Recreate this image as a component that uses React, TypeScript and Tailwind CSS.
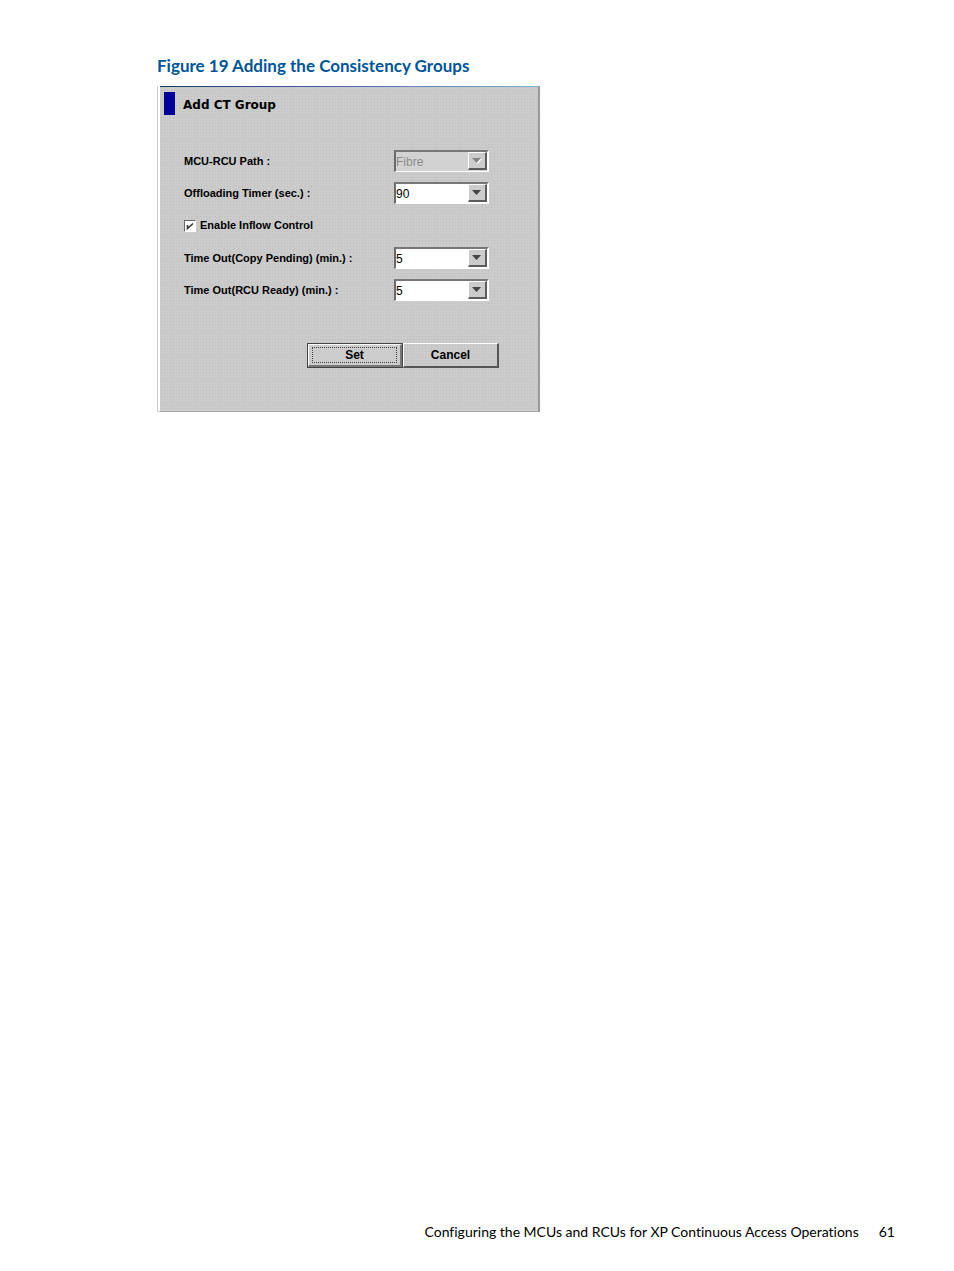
import { useState } from "react";
import type { ReactNode } from "react";

interface SelectRowProps {
  id: string;
  label: string;
  options: string[];
  disabled?: boolean;
}

const SelectRow = ({ id, label, options, disabled = false }: SelectRowProps) => (
  <div className="flex h-[22px] items-center justify-between">
    <label htmlFor={id} className="whitespace-nowrap">
      {label}
    </label>
    <div className="relative h-[22px] w-[95px] shrink-0">
      <select
        id={id}
        disabled={disabled}
        className="block h-full w-full appearance-none rounded-none border-t-2 border-r-2 border-b border-l-2 border-t-[#777777] border-r-white border-b-white border-l-[#6a6a6a] bg-white pt-px pr-5 font-normal text-xs text-black opacity-100 outline-none disabled:bg-[#d2d2d2] disabled:text-[#8c8c8c]"
      >
        {options.map((option) => (
          <option key={option}>{option}</option>
        ))}
      </select>
      <span className="pointer-events-none absolute top-0.5 right-0.5 flex h-[18px] w-[19px] items-center justify-center border-t border-r-2 border-b-2 border-l border-t-white border-r-[#5c5c5c] border-b-[#5c5c5c] border-l-white bg-[#cccccc]">
        <svg width="10" height="6" viewBox="0 0 10 6" aria-hidden="true">
          {disabled && <path d="M1 1h9L5.5 6z" fill="#ffffff" />}
          <path d="M0 0h9L4.5 5z" fill={disabled ? "#858585" : "#444444"} />
        </svg>
      </span>
    </div>
  </div>
);

const DialogButton = ({ children, focused = false }: { children: ReactNode; focused?: boolean }) => (
  <button
    type="button"
    className={
      focused
        ? "h-[25px] w-24 border border-[#444444] bg-[#cccccc] text-xs font-bold"
        : "h-[25px] w-24 border-t border-r-2 border-b-2 border-l border-t-white border-r-[#555555] border-b-[#555555] border-l-white text-xs font-bold"
    }
  >
    {focused ? (
      <span className="flex h-full w-full border-t border-r-2 border-b-2 border-l border-t-white border-r-[#777777] border-b-[#777777] border-l-white px-[3px] py-0.5">
        <span className="flex h-full w-full items-center justify-center border border-dotted border-[#444444]">
          {children}
        </span>
      </span>
    ) : (
      children
    )}
  </button>
);

const AddGroupDialog = () => {
  const [inflow, setInflow] = useState(true);

  return (
    <form className="w-full max-w-[383px] border-l border-[#cccccc] font-['Liberation_Sans',Arial,sans-serif] text-[11px] font-bold text-black">
      <div className="border-r-2 border-b border-l-2 border-r-[#999999] border-b-[#aaaaaa] border-l-white bg-[#cbcbcb] bg-[radial-gradient(#bfbfbf_25%,transparent_25%)] bg-[length:3px_3px] pb-[43px]">
        <div className="h-px bg-linear-to-r from-[#123c70] via-[#5566b8] to-[#7fb5cf]" />
        <div className="flex items-end gap-2 px-1 pt-[5px]">
          <span className="h-[23px] w-[11px] bg-[#000099]" />
          <h2 className="font-['DejaVu_Sans',Verdana,sans-serif] text-xs leading-5 font-bold">
            Add CT Group
          </h2>
        </div>

        <div className="flex flex-col gap-2.5 pt-[35px] pr-[49px] pl-6">
          <SelectRow id="path" label="MCU-RCU Path :" options={["Fibre"]} disabled />
          <SelectRow id="offload" label="Offloading Timer (sec.) :" options={["90", "120"]} />
          <label className="flex h-[23px] items-center gap-1">
            <span className="relative flex size-3">
              <input
                type="checkbox"
                checked={inflow}
                onChange={(e) => setInflow(e.target.checked)}
                className="size-3 appearance-none border border-t-[#666666] border-r-white border-b-white border-l-[#666666] bg-white"
              />
              {inflow && (
                <svg
                  className="pointer-events-none absolute inset-0"
                  width="12"
                  height="12"
                  viewBox="0 0 12 12"
                  aria-hidden="true"
                >
                  <path d="M3.5 5v3.5L9 3.5" fill="none" stroke="#333333" strokeWidth="1.6" />
                </svg>
              )}
            </span>
            Enable Inflow Control
          </label>
          <SelectRow id="copy" label="Time Out(Copy Pending) (min.) :" options={["5", "10"]} />
          <SelectRow id="ready" label="Time Out(RCU Ready) (min.) :" options={["5", "10"]} />
        </div>

        <div className="flex justify-end pt-[42px] pr-[39px]">
          <DialogButton focused>Set</DialogButton>
          <DialogButton>Cancel</DialogButton>
        </div>
      </div>
    </form>
  );
};

export default function App() {
  return (
    <div className="flex min-h-screen flex-col bg-white font-[Lato,sans-serif]">
      <main className="flex-1 pt-[54px] pr-10 pl-[157px]">
        <h1 className="mb-2 text-[17px] leading-6 font-bold text-[#005596]">
          Figure 19 Adding the Consistency Groups
        </h1>
        <AddGroupDialog />
      </main>
      <footer className="flex justify-end gap-5 pr-[59px] pb-[27px] text-sm leading-6 text-black [font-variant-ligatures:none]">
        <span>Configuring the MCUs and RCUs for XP Continuous Access Operations</span>
        <span>61</span>
      </footer>
    </div>
  );
}
